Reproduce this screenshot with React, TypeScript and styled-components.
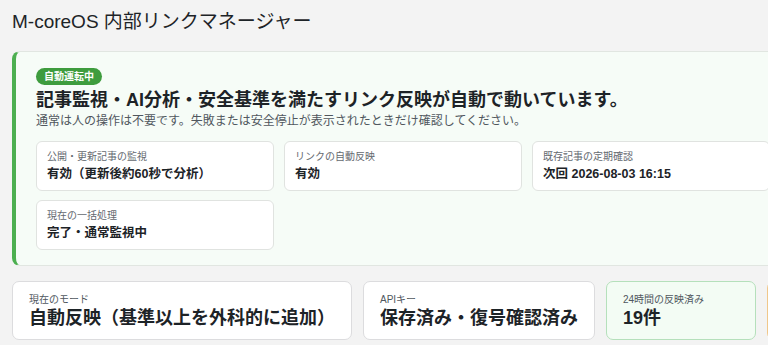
import styled, { createGlobalStyle } from "styled-components";

const GlobalStyle = createGlobalStyle`
  html, body {
    margin: 0;
    padding: 0;
    overflow: hidden;
    background: #f3f3f3;
  }

  body {
    font-family: "Liberation Sans", "Noto Sans CJK JP", sans-serif;
    color: #1d2327;
  }
`;

const statusItems = [
  { label: "公開・更新記事の監視", value: "有効（更新後約60秒で分析）" },
  { label: "リンクの自動反映", value: "有効" },
  { label: "既存記事の定期確認", value: "次回 2026-08-03 16:15" },
  { label: "現在の一括処理", value: "完了・通常監視中" },
];

type Tone = "plain" | "good" | "warn";

const summaryItems: { label: string; value: string; tone: Tone }[] = [
  { label: "現在のモード", value: "自動反映（基準以上を外科的に追加）", tone: "plain" },
  { label: "APIキー", value: "保存済み・復号確認済み", tone: "plain" },
  { label: "24時間の反映済み", value: "19件", tone: "good" },
  { label: "", value: "", tone: "warn" },
];

export default function App() {
  return (
    <>
      <GlobalStyle />
      <Page>
        <Title>M-coreOS 内部リンクマネージャー</Title>

        <Hero>
          <Badge>自動運転中</Badge>
          <Headline>記事監視・AI分析・安全基準を満たすリンク反映が自動で動いています。</Headline>
          <Lead>通常は人の操作は不要です。失敗または安全停止が表示されたときだけ確認してください。</Lead>

          <StatusGrid>
            {statusItems.map((item) => (
              <StatusCard key={item.label}>
                <StatusLabel>{item.label}</StatusLabel>
                <StatusValue>{item.value}</StatusValue>
              </StatusCard>
            ))}
          </StatusGrid>
        </Hero>

        <SummaryRow>
          {summaryItems.map((item, i) => (
            <SummaryCard key={i} $tone={item.tone}>
              <SummaryLabel>{item.label}</SummaryLabel>
              <SummaryValue>{item.value}</SummaryValue>
            </SummaryCard>
          ))}
        </SummaryRow>
      </Page>
    </>
  );
}

const Page = styled.div`
  width: 779px;
  padding: 0 12px;
`;

const Title = styled.h1`
  margin: 9px 0 17px;
  font-size: 19px;
  line-height: 25px;
  font-weight: 400;
  color: #1d2327;
`;

const Hero = styled.section`
  display: flex;
  flex-direction: column;
  align-items: flex-start;
  padding: 16px 20px 15px 20px;

  background: #f6fcf7;
  border: 1px solid #e1e6e1;
  border-left: 4px solid #4caf50;
  border-radius: 8px;
`;

const Badge = styled.span`
  display: inline-block;
  height: 17px;
  padding: 0 8px;

  background: #3e9c3e;
  color: #fff;
  border-radius: 9px;

  font-size: 10px;
  line-height: 17px;
  font-weight: 700;
`;

const Headline = styled.h2`
  margin: 3px 0 0;
  font-size: 18px;
  line-height: 25px;
  font-weight: 700;
  color: #1d2327;
`;

const Lead = styled.p`
  margin: 0;
  font-size: 12px;
  line-height: 16px;
  color: #50575e;
`;

const StatusGrid = styled.div`
  align-self: stretch;
  display: grid;
  grid-template-columns: repeat(3, 1fr);
  gap: 9px 10px;
  margin-top: 12px;
`;

const StatusCard = styled.div`
  display: flex;
  flex-direction: column;
  gap: 1px;
  padding: 8px 10px 7px;

  background: #fff;
  border: 1px solid #e0e3e0;
  border-radius: 6px;
`;

const StatusLabel = styled.span`
  font-size: 10px;
  line-height: 14px;
  color: #646970;
`;

const StatusValue = styled.span`
  font-size: 12.5px;
  line-height: 18px;
  font-weight: 700;
  color: #1d2327;
`;

const SummaryRow = styled.div`
  display: flex;
  gap: 11px;
  margin-top: 15px;
`;

const toneStyles: Record<Tone, { bg: string; border: string }> = {
  plain: { bg: "#ffffff", border: "#dcdcde" },
  good: { bg: "#f3fcf4", border: "#b5e0bb" },
  warn: { bg: "#fff8ee", border: "#f0c78a" },
};

const SummaryCard = styled.div<{ $tone: Tone }>`
  flex-shrink: 0;
  display: flex;
  flex-direction: column;
  min-width: 150px;
  min-height: 58px;
  box-sizing: border-box;
  padding: 11px 16px 9px;

  background: ${(p) => toneStyles[p.$tone].bg};
  border: 1px solid ${(p) => toneStyles[p.$tone].border};
  border-radius: 7px;
`;

const SummaryLabel = styled.span`
  font-size: 10px;
  line-height: 13px;
  color: #50575e;
`;

const SummaryValue = styled.span`
  font-size: 18px;
  line-height: 24px;
  font-weight: 700;
  color: #1d2327;
  white-space: nowrap;
`;
